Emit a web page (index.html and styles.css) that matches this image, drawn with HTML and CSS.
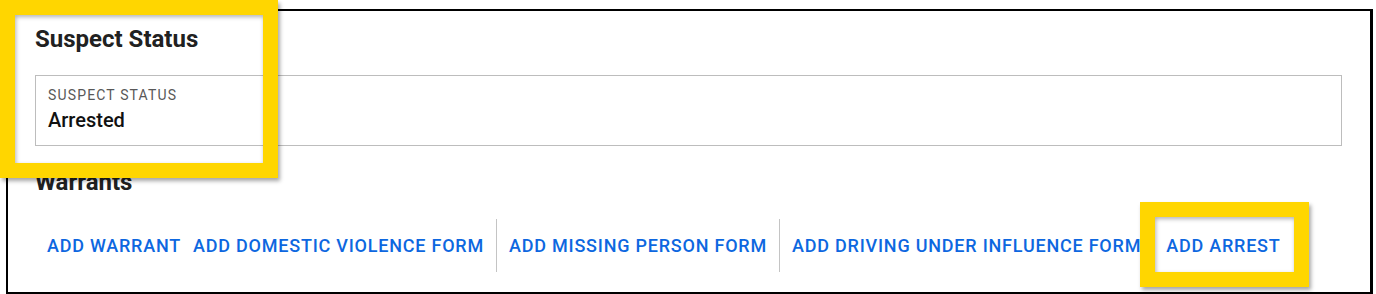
FILE: index.html
```html
<!DOCTYPE html>
<html lang="en">
<head>
<meta charset="utf-8">
<title>Suspect Status</title>
<link rel="stylesheet" href="styles.css">
</head>
<body>
<div class="frame">
  <section class="section">
    <h2 class="title">Suspect Status</h2>
    <div class="field">
      <div class="label">SUSPECT STATUS</div>
      <div class="value">Arrested</div>
    </div>
  </section>
  <section class="section">
    <h2 class="title title-warrants">Warrants</h2>
    <div class="actions">
      <button class="btn">ADD WARRANT</button>
      <button class="btn">ADD DOMESTIC VIOLENCE FORM</button>
      <span class="divider"></span>
      <button class="btn">ADD MISSING PERSON FORM</button>
      <span class="divider"></span>
      <button class="btn">ADD DRIVING UNDER INFLUENCE FORM</button>
      <span class="divider"></span>
      <button class="btn">ADD ARREST</button>
    </div>
  </section>
</div>
<div class="highlight highlight-status"></div>
<div class="highlight highlight-arrest"></div>
</body>
</html>
```

FILE: styles.css
```css
* { box-sizing: border-box; }
html, body { margin: 0; padding: 0; background: #fff; }
body {
  font-family: Roboto, "Liberation Sans", Arial, sans-serif;
  color: #212121;
  width: 1376px;
  height: 294px;
  overflow: hidden;
  position: relative;
}
.frame {
  margin: 9px 3px 0 6px;
  border: 2px solid #000;
  border-right-width: 3px;
  padding: 14px 28px 0 27px;
  height: 285px;
  overflow: hidden;
}
.title {
  margin: 0;
  font-size: 24px;
  line-height: 28px;
  font-weight: 700;
  color: #212121;
}
.field {
  margin-top: 22px;
  border: 1px solid #bdbdbd;
  padding: 11px 12px 13px;
}
.label {
  font-size: 14px;
  line-height: 16px;
  letter-spacing: 1.15px;
  color: #585858;
}
.value {
  margin-top: 5px;
  font-size: 20px;
  line-height: 24px;
  font-weight: 500;
  color: #111;
}
.title-warrants { margin-top: 22px; }
.actions {
  margin-top: 23px;
  height: 53px;
  display: flex;
  align-items: center;
  padding-left: 6px;
}
.btn {
  border: 0;
  margin: 0;
  background: none;
  font-family: inherit;
  font-size: 18px;
  line-height: 24px;
  font-weight: 500;
  letter-spacing: 0.78px;
  color: #0d67e0;
  padding: 0 6px;
  cursor: pointer;
}
.divider {
  width: 1px;
  align-self: stretch;
  background: #c4c4c4;
  margin: 0 6px;
}
.highlight {
  position: absolute;
  border: 15px solid #ffd600;
  box-shadow: 2px 3px 4px rgba(0,0,0,0.35), inset 1px 2px 4px rgba(0,0,0,0.3);
}
.highlight-status { left: 0; top: 0; width: 278px; height: 178px; }
.highlight-arrest { left: 1140px; top: 202px; width: 169px; height: 85px; }
```
